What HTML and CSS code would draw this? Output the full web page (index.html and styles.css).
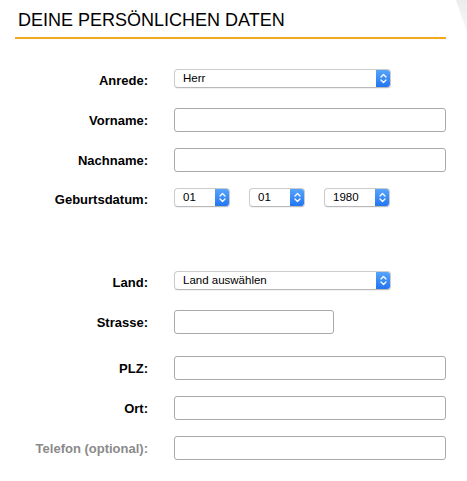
FILE: index.html
```html
<!DOCTYPE html>
<html lang="de">
<head>
<meta charset="utf-8">
<title>Deine persönlichen Daten</title>
<link rel="stylesheet" href="styles.css">
</head>
<body>
<div class="page">
  <h2 class="heading">DEINE PERSÖNLICHEN DATEN</h2>
  <form class="form">
    <div class="row row-select">
      <label class="label">Anrede:</label>
      <div class="select select-wide"><span class="value">Herr</span><span class="arrow"><svg width="15" height="19" viewBox="0 0 15 19"><path d="M5 8 L7.5 5.5 L10 8 M5 11 L7.5 13.5 L10 11" fill="none" stroke="#fff" stroke-width="1.3" stroke-linecap="round" stroke-linejoin="round"/></svg></span></div>
    </div>
    <div class="row gap-18">
      <label class="label">Vorname:</label>
      <input class="input" type="text">
    </div>
    <div class="row">
      <label class="label">Nachname:</label>
      <input class="input" type="text">
    </div>
    <div class="row row-select gap-13">
      <label class="label">Geburtsdatum:</label>
      <div class="dates">
        <div class="select select-day"><span class="value">01</span><span class="arrow"><svg width="15" height="19" viewBox="0 0 15 19"><path d="M5 8 L7.5 5.5 L10 8 M5 11 L7.5 13.5 L10 11" fill="none" stroke="#fff" stroke-width="1.3" stroke-linecap="round" stroke-linejoin="round"/></svg></span></div>
        <div class="select select-day"><span class="value">01</span><span class="arrow"><svg width="15" height="19" viewBox="0 0 15 19"><path d="M5 8 L7.5 5.5 L10 8 M5 11 L7.5 13.5 L10 11" fill="none" stroke="#fff" stroke-width="1.3" stroke-linecap="round" stroke-linejoin="round"/></svg></span></div>
        <div class="select select-year"><span class="value">1980</span><span class="arrow"><svg width="15" height="19" viewBox="0 0 15 19"><path d="M5 8 L7.5 5.5 L10 8 M5 11 L7.5 13.5 L10 11" fill="none" stroke="#fff" stroke-width="1.3" stroke-linecap="round" stroke-linejoin="round"/></svg></span></div>
      </div>
    </div>
    <div class="row row-select gap-59">
      <label class="label">Land:</label>
      <div class="select select-wide"><span class="value">Land auswählen</span><span class="arrow"><svg width="15" height="19" viewBox="0 0 15 19"><path d="M5 8 L7.5 5.5 L10 8 M5 11 L7.5 13.5 L10 11" fill="none" stroke="#fff" stroke-width="1.3" stroke-linecap="round" stroke-linejoin="round"/></svg></span></div>
    </div>
    <div class="row gap-18">
      <label class="label">Strasse:</label>
      <input class="input input-short" type="text">
    </div>
    <div class="row gap-22">
      <label class="label">PLZ:</label>
      <input class="input" type="text">
    </div>
    <div class="row">
      <label class="label">Ort:</label>
      <input class="input" type="text">
    </div>
    <div class="row">
      <label class="label label-optional">Telefon (optional):</label>
      <input class="input" type="text">
    </div>
  </form>
</div>
</body>
</html>
```
FILE: styles.css
```css
html, body {
  margin: 0;
  padding: 0;
  background: #fff;
}
body {
  font-family: "Liberation Sans", Arial, Helvetica, sans-serif;
  color: #000;
  position: relative;
  overflow: hidden;
}
body::after {
  content: "";
  position: absolute;
  top: 0;
  right: 0;
  width: 11px;
  height: 32px;
  background: linear-gradient(to bottom, #ececec, #f7f7f7);
  clip-path: polygon(0 0, 100% 0, 100% 100%);
}
.page {
  padding: 10px 21px 0 15px;
}
.heading {
  margin: 0;
  padding: 0 0 6px 3px;
  font-size: 18px;
  font-weight: normal;
  line-height: normal;
  border-bottom: 2px solid #f5a81c;
}
.form {
  margin-top: 27px;
  display: flex;
  flex-direction: column;
}
.row {
  display: grid;
  grid-template-columns: 133px auto;
  column-gap: 26px;
  align-items: center;
  height: 24px;
  margin-top: 16px;
}
.row:first-child { margin-top: 0; }
.gap-13 { margin-top: 13px; }
.gap-18 { margin-top: 18px; }
.gap-22 { margin-top: 22px; }
.gap-59 { margin-top: 59px; }
.label {
  text-align: right;
  font-weight: bold;
  font-size: 13px;
  white-space: nowrap;
}
.row-select .label {
  padding-top: 5px;
}
.label-optional {
  color: #8a8a8a;
}
.input {
  box-sizing: border-box;
  width: 272px;
  height: 24px;
  margin: 0;
  border: 1px solid #a9a9a9;
  border-radius: 3px;
  background: #fff;
  padding: 0 6px;
  font: inherit;
}
.input-short {
  width: 160px;
}
.select {
  box-sizing: border-box;
  height: 19px;
  display: flex;
  align-items: center;
  border: 1px solid #cbcbcb;
  border-bottom-color: #b9b9b9;
  border-radius: 4px;
  background: #fff;
  box-shadow: 0 1px 1px rgba(0, 0, 0, 0.06);
  overflow: hidden;
  font-size: 11.5px;
}
.select .value {
  flex: 1;
  padding-left: 8px;
  white-space: nowrap;
}
.select .arrow {
  width: 15px;
  align-self: stretch;
  margin: -1px -1px -1px 0;
  display: flex;
  align-items: center;
  justify-content: center;
  background: linear-gradient(to bottom, #5aa7fc, #1f72f0);
  border-radius: 0 4px 4px 0;
}
.select .arrow svg {
  display: block;
}
.select-wide { width: 217px; }
.dates {
  display: flex;
  gap: 19px;
}
.select-day { width: 56px; }
.select-year { width: 66px; }
```
